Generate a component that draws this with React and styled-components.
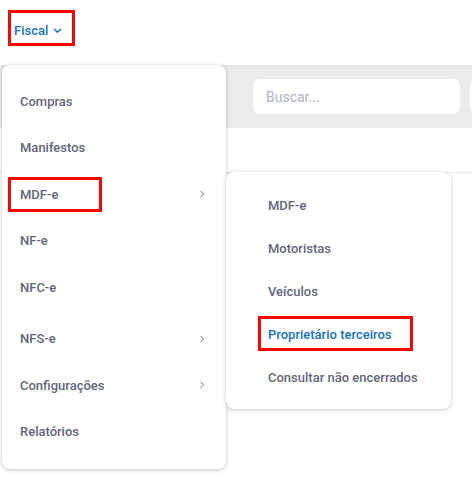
import styled, { createGlobalStyle } from 'styled-components';

const GlobalStyle = createGlobalStyle`
  html, body {
    margin: 0;
    padding: 0;
    background: #fff;
    font-family: Roboto, "Liberation Sans", sans-serif;
  }
`;

const Page = styled.div`
  position: relative;
  width: 472px;
  height: 479px;
  overflow: hidden;
  background: #fff;
`;

const Header = styled.div`
  height: 65px;
  display: flex;
  align-items: center;
  padding-left: 14px;
  position: relative;
  z-index: 1;
  box-shadow: 0 2px 4px rgba(0, 0, 0, 0.04);
`;

const NavButton = styled.button`
  position: relative;
  display: flex;
  align-items: center;
  gap: 5px;
  margin-top: -5px;
  padding: 0;
  border: none;
  background: none;
  font-family: inherit;
  font-size: 13px;
  font-weight: 500;
  color: #1b72b8;
`;

const Toolbar = styled.div`
  height: 63px;
  background: #e9ebec;
  display: flex;
  align-items: center;
  padding-left: 253px;
  gap: 10px;
`;

const Search = styled.input`
  flex: none;
  width: 207px;
  height: 35px;
  box-sizing: border-box;
  border: none;
  border-radius: 7px;
  background: #fff;
  padding: 0 13px;
  font-family: inherit;
  font-size: 14px;
  color: #333;
  &::placeholder {
    color: #aeb3c6;
  }
`;

const Content = styled.div`
  margin-top: 44px;
  border-top: 1px solid #e7e8ea;
  height: 300px;
`;

const Menu = styled.div`
  position: absolute;
  left: ${({ $left }) => $left}px;
  top: ${({ $top }) => $top}px;
  width: ${({ $width }) => $width}px;
  box-sizing: border-box;
  padding: ${({ $pad }) => $pad};
  background: #fff;
  border-radius: 8px;
  box-shadow: 0 1px 4px rgba(0, 0, 0, 0.22), 0 0 1px rgba(0, 0, 0, 0.12);
  display: flex;
  flex-direction: column;
  z-index: ${({ $z }) => $z};
`;

const Item = styled.div`
  position: relative;
  height: ${({ $h }) => $h}px;
  margin-top: ${({ $gap }) => $gap || 0}px;
  display: flex;
  align-items: center;
  justify-content: space-between;
  padding: 0 ${({ $padR }) => $padR}px 0 ${({ $padL }) => $padL}px;
  font-size: 13px;
  font-weight: 500;
  color: ${({ $active }) => ($active ? '#1b72b8' : '#62667a')};
  white-space: nowrap;
`;

const Mark = styled.span`
  position: absolute;
  left: ${({ $x }) => $x}px;
  top: ${({ $y }) => $y}px;
  width: ${({ $w }) => $w}px;
  height: ${({ $h }) => $h}px;
  box-sizing: border-box;
  border: 3px solid #f00;
  pointer-events: none;
`;

const Chevron = ({ dir = 'right', color = '#9ca1b3', size = 8 }) => (
  <svg width={size} height={size} viewBox="0 0 10 10" fill="none">
    {dir === 'right' ? (
      <path d="M3.5 1.5 L7 5 L3.5 8.5" stroke={color} strokeWidth="1.4" strokeLinecap="round" strokeLinejoin="round" />
    ) : (
      <path d="M1.5 3.5 L5 7 L8.5 3.5" stroke={color} strokeWidth="1.6" strokeLinecap="round" strokeLinejoin="round" />
    )}
  </svg>
);

const mainItems = [
  { label: 'Compras' },
  { label: 'Manifestos' },
  { label: 'MDF-e', sub: true, marked: true },
  { label: 'NF-e' },
  { label: 'NFC-e' },
  { label: 'NFS-e', sub: true, gap: 5 },
  { label: 'Configurações', sub: true },
  { label: 'Relatórios' },
];

const subItems = [
  { label: 'MDF-e' },
  { label: 'Motoristas' },
  { label: 'Veículos' },
  { label: 'Proprietário terceiros', active: true, marked: true },
  { label: 'Consultar não encerrados' },
];

const App = () => {
  return (
    <Page>
      <GlobalStyle />
      <Header>
        <NavButton>
          Fiscal
          <Chevron dir="down" color="#1b72b8" size={9} />
          <Mark $x={-6} $y={-13} $w={67} $h={36} />
        </NavButton>
      </Header>
      <Toolbar>
        <Search placeholder="Buscar..." />
        <Search placeholder="" />
      </Toolbar>
      <Content />

      <Menu $left={2} $top={65} $width={224} $pad="13px 0 14px" $z={2}>
        {mainItems.map((it) => (
          <Item key={it.label} $h={46.5} $gap={it.gap} $padL={18} $padR={20}>
            {it.label}
            {it.sub && <Chevron />}
            {it.marked && <Mark $x={6} $y={6} $w={94} $h={35} />}
          </Item>
        ))}
      </Menu>

      <Menu $left={226} $top={172} $width={225} $pad="12px 0 10px" $z={3}>
        {subItems.map((it) => (
          <Item key={it.label} $h={43} $padL={42} $padR={10} $active={it.active}>
            {it.label}
            {it.marked && <Mark $x={32} $y={3} $w={155} $h={35} />}
          </Item>
        ))}
      </Menu>
    </Page>
  );
};

export default App;
